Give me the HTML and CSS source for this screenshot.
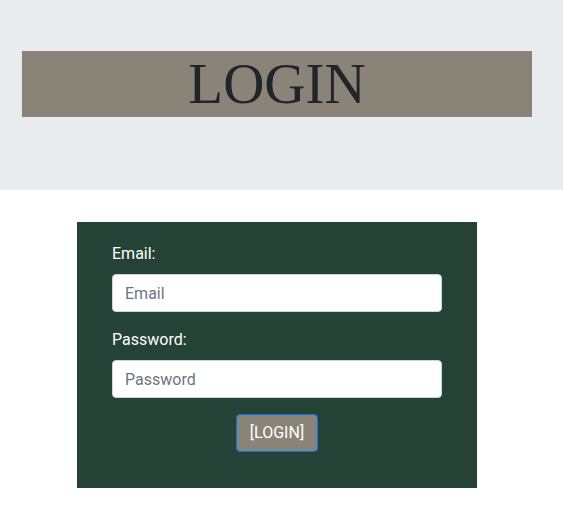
FILE: index.html
```html
<!DOCTYPE html>
<html>
<head>
<meta charset="utf-8">
<link rel="stylesheet" href="styles.css">
</head>
<body>
<header class="hero">
  <h1 class="hero-title">LOGIN</h1>
</header>
<main class="card">
  <form class="login-form">
    <label class="form-label" for="email">Email:</label>
    <input class="form-input" id="email" type="email" placeholder="Email">
    <label class="form-label gap" for="password">Password:</label>
    <input class="form-input" id="password" type="password" placeholder="Password">
    <div class="actions">
      <button class="btn" type="button">[LOGIN]</button>
    </div>
  </form>
</main>
</body>
</html>
```
FILE: styles.css
```css
* { box-sizing: border-box; }
body {
  margin: 0;
  background: #ffffff;
  font-family: Roboto, "Liberation Sans", sans-serif;
  font-size: 16px;
  line-height: 1.5;
  color: #212529;
}
.hero {
  background: #e9ecef;
  height: 190px;
  padding: 51px 31px 0 22px;
}
.hero-title {
  margin: 0;
  background: #8a8378;
  color: #212529;
  font-family: "Liberation Serif", "Times New Roman", serif;
  font-weight: normal;
  font-size: 57px;
  line-height: 66px;
  text-align: center;
}
.card {
  width: 400px;
  margin: 32px 0 0 77px;
  background: #244236;
  padding: 20px 35px 36px;
}
.login-form {
  display: flex;
  flex-direction: column;
}
.form-label {
  display: block;
  color: #ffffff;
  margin-bottom: 8px;
  line-height: 24px;
}
.form-label.gap { margin-top: 16px; }
.form-input {
  width: 330px;
  height: 38px;
  padding: 6px 12px;
  border: 1px solid #ced4da;
  border-radius: 4px;
  font-family: Roboto, "Liberation Sans", sans-serif;
  font-size: 16px;
  color: #212529;
  background: #ffffff;
}
.form-input::placeholder { color: #6c757d; }
.actions {
  display: flex;
  justify-content: center;
  margin-top: 16px;
}
.btn {
  height: 38px;
  padding: 6px 13px;
  background: #8a8378;
  color: #ffffff;
  border: 1px solid #0d6efd;
  border-radius: 4px;
  font-family: Roboto, "Liberation Sans", sans-serif;
  font-size: 16px;
  line-height: 24px;
}
```
